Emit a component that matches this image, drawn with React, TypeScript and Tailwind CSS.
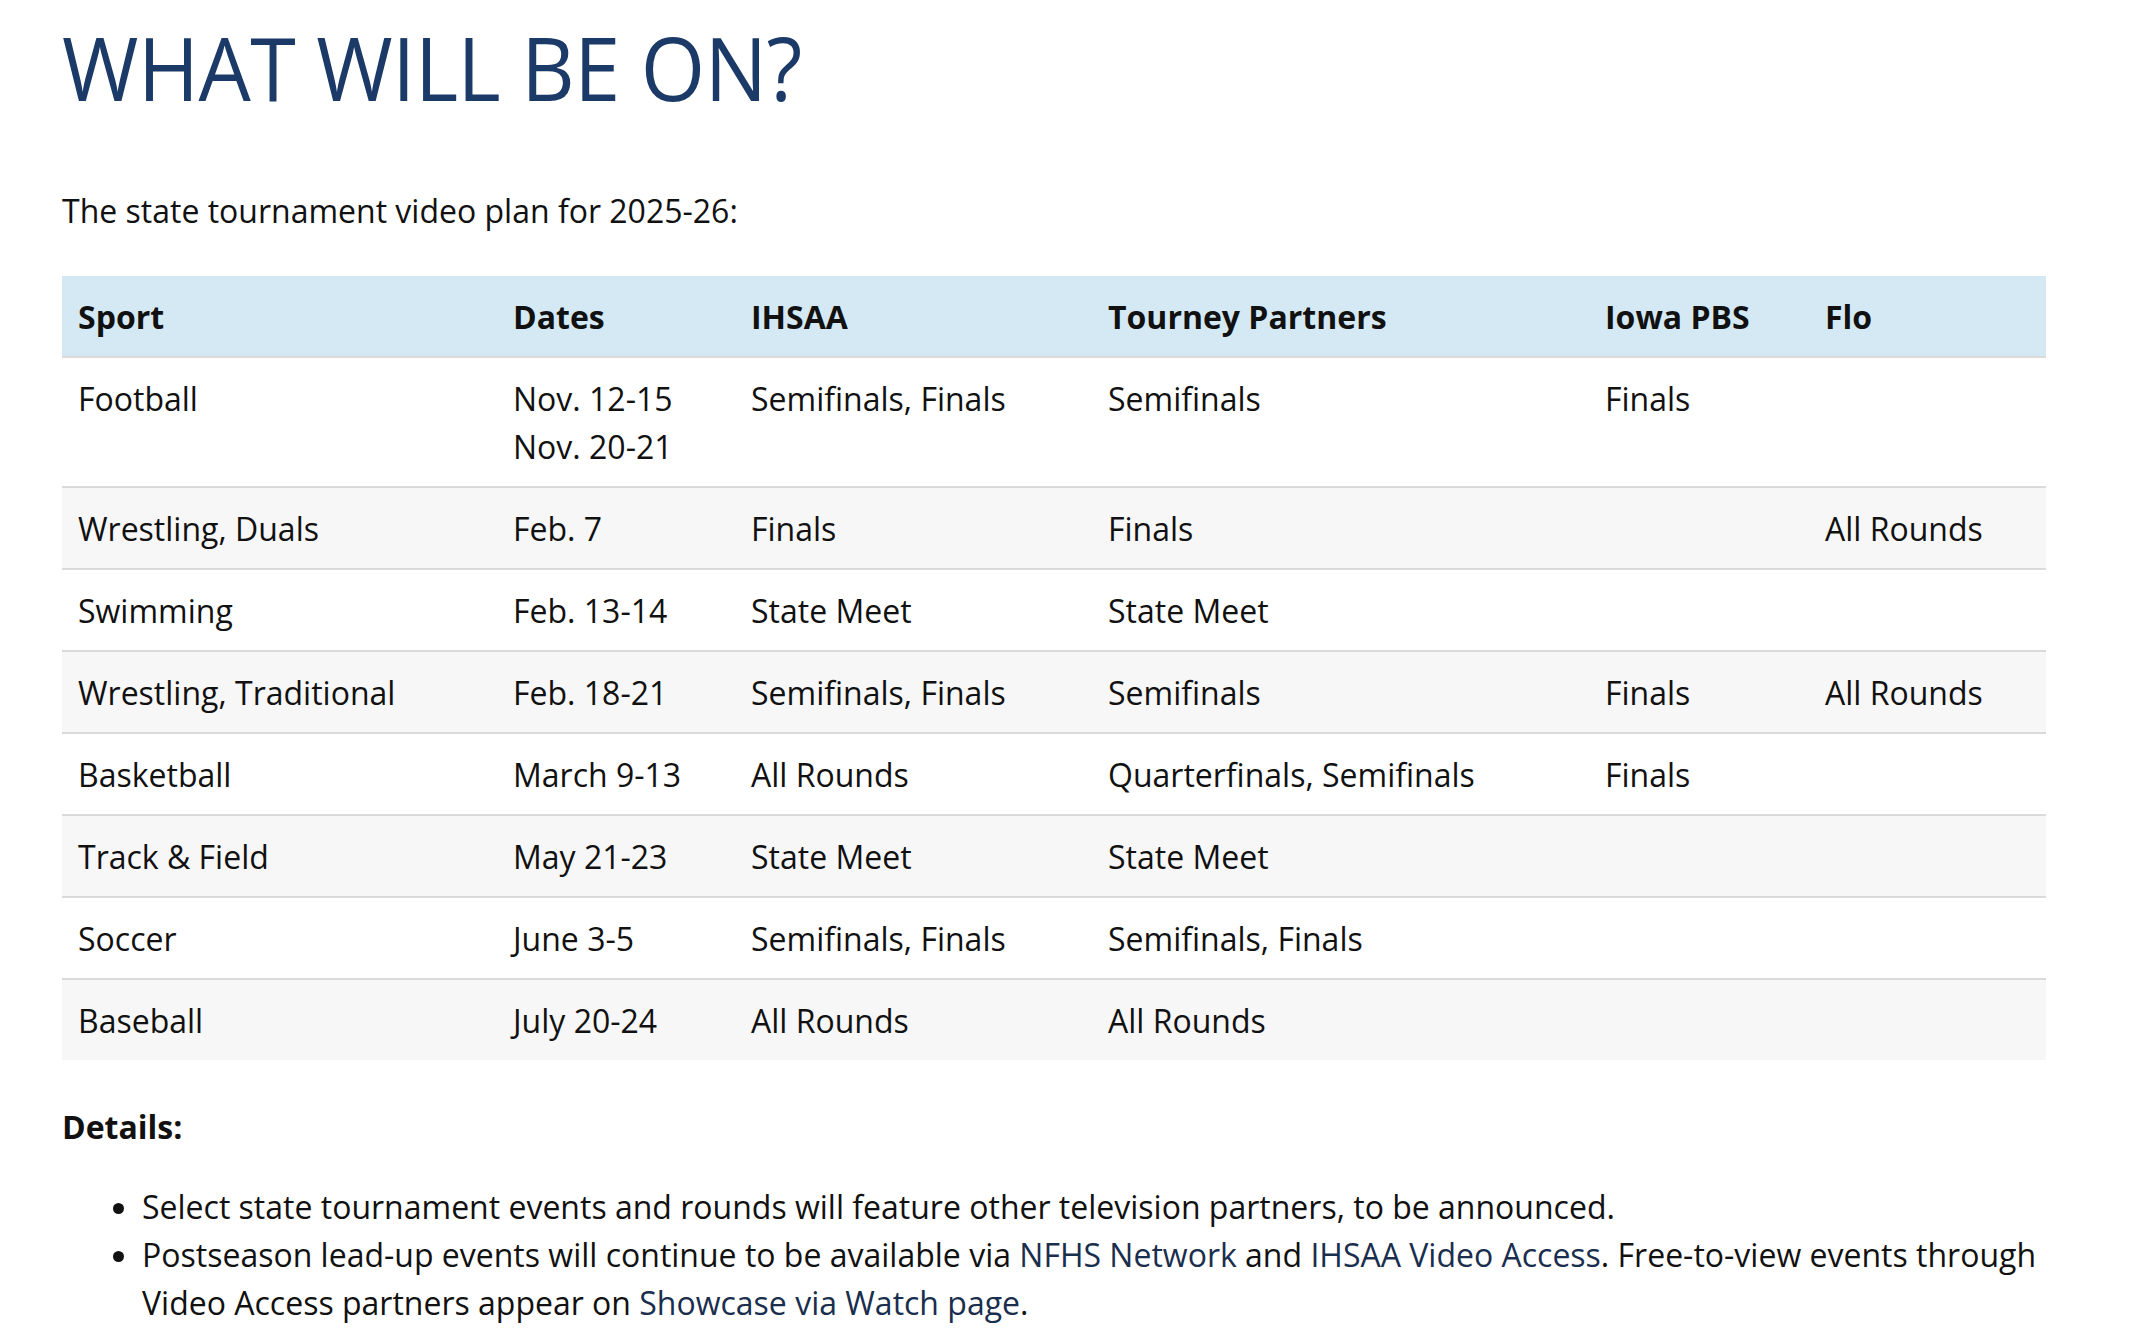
import React from 'react'

type Row = {
  sport: string
  dates: string[]
  ihsaa: string
  partners: string
  pbs: string
  flo: string
}

const rows: Row[] = [
  { sport: 'Football', dates: ['Nov. 12-15', 'Nov. 20-21'], ihsaa: 'Semifinals, Finals', partners: 'Semifinals', pbs: 'Finals', flo: '' },
  { sport: 'Wrestling, Duals', dates: ['Feb. 7'], ihsaa: 'Finals', partners: 'Finals', pbs: '', flo: 'All Rounds' },
  { sport: 'Swimming', dates: ['Feb. 13-14'], ihsaa: 'State Meet', partners: 'State Meet', pbs: '', flo: '' },
  { sport: 'Wrestling, Traditional', dates: ['Feb. 18-21'], ihsaa: 'Semifinals, Finals', partners: 'Semifinals', pbs: 'Finals', flo: 'All Rounds' },
  { sport: 'Basketball', dates: ['March 9-13'], ihsaa: 'All Rounds', partners: 'Quarterfinals, Semifinals', pbs: 'Finals', flo: '' },
  { sport: 'Track & Field', dates: ['May 21-23'], ihsaa: 'State Meet', partners: 'State Meet', pbs: '', flo: '' },
  { sport: 'Soccer', dates: ['June 3-5'], ihsaa: 'Semifinals, Finals', partners: 'Semifinals, Finals', pbs: '', flo: '' },
  { sport: 'Baseball', dates: ['July 20-24'], ihsaa: 'All Rounds', partners: 'All Rounds', pbs: '', flo: '' },
]

const headers = ['Sport', 'Dates', 'IHSAA', 'Tourney Partners', 'Iowa PBS', 'Flo']

export default function App() {
  return (
    <div className="min-h-screen bg-white text-[#111111] font-['Open_Sans',sans-serif] text-[32px] leading-[48px]">
      <div className="w-[1984px] ml-[62px] pt-[23px]">
        <h1 className="text-[88px] leading-[88px] font-medium text-[#1b3a67]">
          <span className="inline-block origin-left scale-x-[0.94] tracking-[-0.5px]">WHAT WILL BE ON?</span>
        </h1>

        <p className="mt-[76px]">The state tournament video plan for 2025-26:</p>

        {/* TOURNAMENT VIDEO TABLE */}
        <table className="mt-[41px] w-full table-fixed border-collapse">
          <colgroup>
            <col className="w-[435px]" />
            <col className="w-[238px]" />
            <col className="w-[357px]" />
            <col className="w-[497px]" />
            <col className="w-[220px]" />
            <col className="w-[237px]" />
          </colgroup>
          <thead>
            <tr className="bg-[#d4e9f4] border-b-2 border-[#dadada]">
              {headers.map(h => (
                <th key={h} className="px-4 pt-[17px] pb-[15px] text-left font-bold">{h}</th>
              ))}
            </tr>
          </thead>
          <tbody>
            {rows.map((r, i) => (
              <tr key={r.sport} className={`${i % 2 === 1 ? 'bg-[#f7f7f7]' : 'bg-white'} ${i < rows.length - 1 ? 'border-b-2 border-[#dadada]' : ''}`}>
                <td className="px-4 pt-[17px] pb-[15px] align-top">{r.sport}</td>
                <td className="px-4 pt-[17px] pb-[15px] align-top">
                  {r.dates.map(d => <div key={d}>{d}</div>)}
                </td>
                <td className="px-4 pt-[17px] pb-[15px] align-top">{r.ihsaa}</td>
                <td className="px-4 pt-[17px] pb-[15px] align-top">{r.partners}</td>
                <td className="px-4 pt-[17px] pb-[15px] align-top">{r.pbs}</td>
                <td className="px-4 pt-[17px] pb-[15px] align-top">{r.flo}</td>
              </tr>
            ))}
          </tbody>
        </table>

        <p className="mt-[43px] font-bold">Details:</p>

        <ul className="mt-[32px] list-disc pl-[80px]">
          <li>Select state tournament events and rounds will feature other television partners, to be announced.</li>
          <li>
            Postseason lead-up events will continue to be available via{' '}
            <a href="#" className="text-[#1a2e4e]">NFHS Network</a> and{' '}
            <a href="#" className="text-[#1a2e4e]">IHSAA Video Access</a>. Free-to-view events through Video Access partners appear on{' '}
            <a href="#" className="text-[#1a2e4e]">Showcase via Watch page</a>.
          </li>
        </ul>
      </div>
    </div>
  )
}
